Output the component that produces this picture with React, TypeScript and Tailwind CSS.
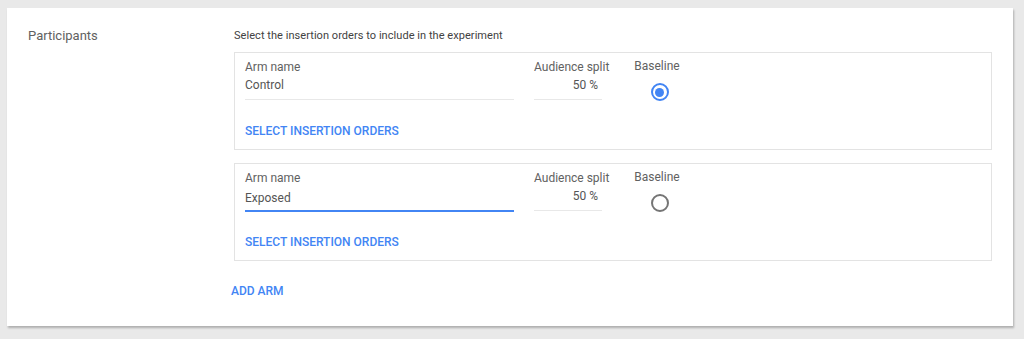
import { useState } from 'react';

// ============================================================================
// EXPERIMENT - PARTICIPANTS
// ============================================================================

type Arm = { name: string; split: number; focused?: boolean };

function Radio({ checked, onClick }: { checked: boolean; onClick: () => void }) {
    return (
        <button
            type="button"
            onClick={onClick}
            className={
                checked
                    ? 'w-[18px] h-[18px] rounded-full border-2 border-[#4285f4] flex items-center justify-center'
                    : 'w-[18px] h-[18px] rounded-full border-2 border-[#757575] flex items-center justify-center'
            }
        >
            {checked && <span className="w-[9px] h-[9px] rounded-full bg-[#4285f4]" />}
        </button>
    );
}

function ArmBox({ arm, baseline, onBaseline }: { arm: Arm; baseline: boolean; onBaseline: () => void }) {
    return (
        <div className="h-[98px] border border-[#e3e3e3] pl-[10px] pt-[6px]">
            <div className="flex">
                <div className="w-[269px]">
                    <div className="h-4 leading-4 text-[12px] text-[#616161]">Arm name</div>
                    <div
                        className={
                            arm.focused
                                ? 'h-[26px] leading-5 pt-[2px] text-[12px] text-[#555555] border-b-2 border-[#4285f4]'
                                : 'h-[25px] leading-5 text-[12px] text-[#555555] border-b border-[#e8e8e8]'
                        }
                    >
                        {arm.name}
                    </div>
                </div>
                <div className="w-[68px] ml-5">
                    <div className="h-4 leading-4 text-[12px] text-[#616161] whitespace-nowrap">Audience split</div>
                    <div className="h-[25px] leading-5 text-[12px] text-[#555555] border-b border-[#e8e8e8] text-right pr-1">
                        {arm.split} %
                    </div>
                </div>
                <div className="ml-[33px] w-[44px] flex flex-col items-center">
                    <div className="h-4 leading-[14px] text-[12px] text-[#616161]">Baseline</div>
                    <div className="mt-[8px] ml-[5px]">
                        <Radio checked={baseline} onClick={onBaseline} />
                    </div>
                </div>
            </div>
            <div className="mt-[22px] h-4 leading-4 text-[12px] font-medium text-[#4285f4] uppercase">
                Select insertion orders
            </div>
        </div>
    );
}

export default function App() {
    const [baseline, setBaseline] = useState(0);
    const arms: Arm[] = [
        { name: 'Control', split: 50 },
        { name: 'Exposed', split: 50, focused: true },
    ];

    return (
        <div className="min-h-[339px] bg-[#e9e9e9] pt-2 pl-[7px] pr-[11px] font-['Roboto',sans-serif]">
            <section className="bg-white h-[318px] shadow-[1px_2px_2px_rgba(0,0,0,0.25)] flex pt-5">
                <h2 className="w-[227px] pl-[21px] h-4 leading-4 text-[13px] text-[#616161]">Participants</h2>
                <div className="w-[758px]">
                    <p className="h-4 leading-4 text-[11px] tracking-[0.05px] text-[#424242] mb-2">
                        Select the insertion orders to include in the experiment
                    </p>
                    <div className="flex flex-col gap-[13px]">
                        {arms.map((arm, i) => (
                            <ArmBox key={arm.name} arm={arm} baseline={baseline === i} onBaseline={() => setBaseline(i)} />
                        ))}
                    </div>
                    <button type="button" className="mt-[22px] -ml-[3px] h-4 leading-4 text-[12px] font-medium text-[#4285f4] uppercase">
                        Add arm
                    </button>
                </div>
            </section>
        </div>
    );
}
